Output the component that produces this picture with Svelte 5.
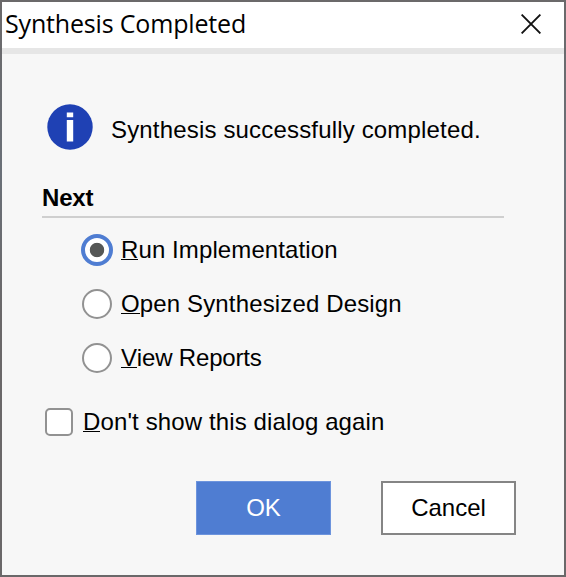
<script>
  let choice = $state('run');
  let hide = $state(false);
  const options = [
    { id: 'run', key: 'R', rest: 'un Implementation', ls: 0.1 },
    { id: 'open', key: 'O', rest: 'pen Synthesized Design', ls: 0.14 },
    { id: 'view', key: 'V', rest: 'iew Reports', ls: -0.17 }
  ];
</script>

<div class="frame">
  <div class="dialog">
    <header>
      <span class="title">Synthesis Completed</span>
      <svg class="close" width="20" height="20" viewBox="0 0 20 20">
        <path d="M.6.6 19.4 19.4M19.4.6.6 19.4" stroke="#111" stroke-width="1.9" />
      </svg>
    </header>
    <main>
      <div class="message">
        <svg width="46" height="46" viewBox="0 0 46 46">
          <circle cx="23" cy="23" r="22.7" fill="#1f41b4" />
          <path d="M19.8 8.6h6.4v4.6h-6.4zM19.8 16h6.4v21.4h-6.4z" fill="#fff" />
        </svg>
        <span>Synthesis successfully completed.</span>
      </div>
      <h2>Next</h2>
      <div class="options">
        {#each options as o}
          <button class="option" onclick={() => (choice = o.id)}>
            <span class="radio" class:on={choice === o.id}></span>
            <span class="label" style="letter-spacing: {o.ls}px"><span class="key">{o.key}</span>{o.rest}</span>
          </button>
        {/each}
      </div>
      <button class="check" onclick={() => (hide = !hide)}>
        <span class="box">{hide ? '✓' : ''}</span>
        <span class="label"><span class="key">D</span>on't show this dialog again</span>
      </button>
      <footer>
        <button class="ok">OK</button>
        <button class="cancel">Cancel</button>
      </footer>
    </main>
  </div>
</div>

<style>
  .frame {
    box-sizing: border-box;
    width: 566px;
    height: 577px;
    padding: 2px;
    background: linear-gradient(#6b696a, #6a7078 30%, #6a6869 55%, #6a6869);
    font-family: "Liberation Sans", Arial, sans-serif;
    font-size: 24px;
    line-height: 28px;
    color: #000;
    overflow: hidden;
  }
  .dialog { height: 573px; background: #f7f7f7; }
  header {
    box-sizing: border-box;
    height: 52px;
    display: flex;
    justify-content: space-between;
    background: #fff;
    border-bottom: 6px solid #e6e6e6;
    padding: 0 23px 0 3px;
  }
  .title {
    font-family: "Open Sans", "Noto Sans", sans-serif;
    font-size: 25px;
    line-height: 42px;
    letter-spacing: -0.17px;
    white-space: nowrap;
  }
  .close { margin-top: 12px; }
  main { padding: 50px 0 0 40px; }
  .message { display: flex; height: 46px; gap: 18px; padding-left: 5px; white-space: nowrap; }
  .message span { margin-top: 12px; letter-spacing: 0.17px; }
  h2 {
    margin: 34px 0 0;
    width: 462px;
    height: 34px;
    box-sizing: border-box;
    border-bottom: 2px solid #cfcfcf;
    font-size: 24px;
    line-height: 28px;
    letter-spacing: -0.2px;
  }
  button {
    font: inherit;
    color: inherit;
    background: none;
    border: 0;
    padding: 0;
    margin: 0;
    display: flex;
    align-items: center;
    white-space: nowrap;
  }
  .options { padding: 5px 0 0 39px; }
  .option { height: 54px; gap: 8px; }
  .radio {
    box-sizing: border-box;
    width: 30px;
    height: 30px;
    margin: 0 1px;
    border: 2px solid #929292;
    border-radius: 50%;
    background: #fff;
  }
  .radio.on {
    width: 32px;
    height: 32px;
    margin: 0;
    border: 4px solid #4f7dd2;
    background: radial-gradient(circle, #555756 6.8px, #fff 7.6px);
  }
  .key { display: inline-block; height: 24px; line-height: 28px; box-shadow: 0 -1px 0 #000 inset; }
  .check { height: 54px; padding-left: 3px; margin-top: 10px; gap: 10px; letter-spacing: 0.12px; }
  .box {
    box-sizing: border-box;
    width: 28px;
    height: 28px;
    border: 2px solid #929292;
    border-radius: 5px;
    background: #fff;
    line-height: 24px;
  }
  footer { display: flex; gap: 50px; padding: 32px 0 0 154px; }
  footer button { box-sizing: border-box; width: 135px; height: 54px; padding-bottom: 1px; justify-content: center; }
  .ok { background: #4f7dd2; border: 1px solid #6d94dd; color: #fff; }
  .cancel { background: #fff; border: 2px solid #858585; }
</style>
